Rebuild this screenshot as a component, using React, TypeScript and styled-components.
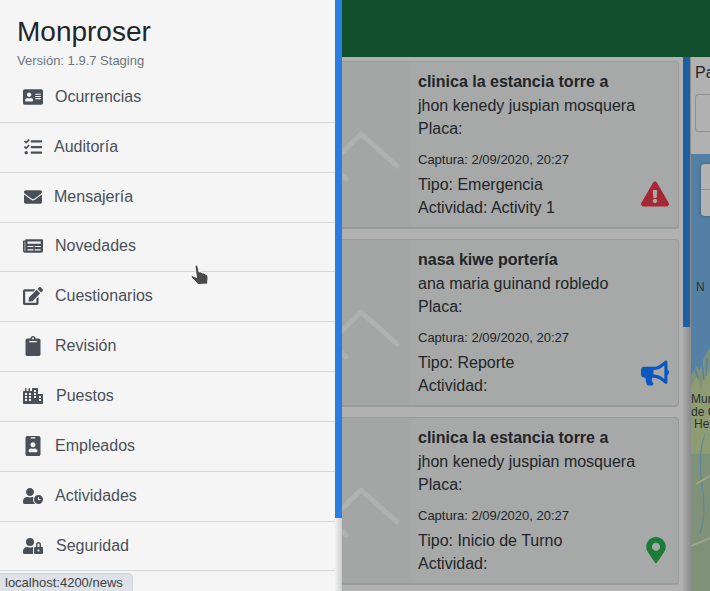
import React from 'react';
import styled, { createGlobalStyle } from 'styled-components';
import {
  FaAddressCard,
  FaBullhorn,
  FaCity,
  FaClipboard,
  FaEdit,
  FaEnvelope,
  FaExclamationTriangle,
  FaIdBadge,
  FaMapMarkerAlt,
  FaNewspaper,
  FaTasks,
  FaUserClock,
  FaUserLock,
} from 'react-icons/fa';

const GlobalStyle = createGlobalStyle`
  html, body {
    margin: 0;
    height: 100%;
    overflow: hidden;
    background: #b0b0b0;
  }
  #root {
    height: 100%;
  }
`;

const Page = styled.div`
  position: relative;
  display: flex;
  width: 710px;
  height: 591px;
  overflow: hidden;
  font-family: 'Liberation Sans', Arial, sans-serif;
`;

const Sidebar = styled.aside`
  width: 335px;
  flex: none;
  background: #f5f5f6;
  overflow: hidden;
`;

const Brand = styled.header`
  padding: 15px 17px 0;
  height: 73px;
  box-sizing: border-box;
`;

const BrandName = styled.h1`
  margin: 0;
  font-size: 28px;
  line-height: 34px;
  font-weight: 400;
  color: #212529;
`;

const Version = styled.div`
  margin-top: 3px;
  font-size: 13px;
  line-height: 18px;
  color: #6c757d;
`;

const Menu = styled.nav`
  display: flex;
  flex-direction: column;
`;

const MenuItem = styled.div`
  display: flex;
  align-items: center;
  height: 49.85px;
  flex: none;
  box-sizing: border-box;
  padding-bottom: 1px;
  border-bottom: 1px solid #d6d7d8;
  color: #495057;
  font-size: 16px;
`;

const MenuIcon = styled.span<{ $width: number; $left: number }>`
  display: flex;
  justify-content: center;
  width: ${(p) => p.$width}px;
  margin-left: ${(p) => p.$left}px;
  margin-right: 12px;
  color: #495057;
  font-size: 20px;
`;

const Scrollbar = styled.div`
  width: 7px;
  flex: none;
  display: flex;
  flex-direction: column;
`;

const ScrollThumb = styled.div`
  height: 518px;
  flex: none;
  background: #2a7de1;
`;

const ScrollTrack = styled.div`
  flex: 1;
  background: linear-gradient(to right, #f2f2f2, #cdcdcd);
`;

const Main = styled.main`
  flex: 1;
  min-width: 0;
  display: flex;
  flex-direction: column;
`;

const TopBar = styled.div`
  height: 57px;
  flex: none;
  background: #114e2c;
`;

const Content = styled.div`
  flex: 1;
  min-height: 0;
  display: flex;
`;

const FeedColumn = styled.section`
  width: 341px;
  flex: none;
  display: flex;
  flex-direction: column;
  gap: 10px;
  padding: 4px 4px 0 0;
  box-sizing: border-box;
  overflow: hidden;
  background: #b1b1b1;
`;

const Card = styled.article`
  display: flex;
  height: 168px;
  flex: none;
  box-sizing: border-box;
  position: relative;
  background: #a7a9a8;
  border: 1px solid #999a9a;
  border-left: 0;
  border-bottom-width: 2px;
  border-radius: 0 4px 4px 0;
`;

const Thumb = styled.div`
  width: 68px;
  flex: none;
  background: #a4a5a5;
  overflow: hidden;
`;

const ThumbArt = styled.svg`
  display: block;
  width: 68px;
  height: 100%;
`;

const CardBody = styled.div`
  flex: 1;
  padding: 8px 0 0 8px;
  font-size: 16px;
  line-height: 23.6px;
  color: #212529;
`;

const Site = styled.div`
  font-weight: 700;
`;

const Captured = styled.div`
  margin-top: 8px;
  margin-bottom: 2px;
  font-size: 13px;
  line-height: 22px;
`;

const TypeIcon = styled.span<{ $color: string; $size: number; $right: number; $bottom: number }>`
  position: absolute;
  right: ${(p) => p.$right}px;
  bottom: ${(p) => p.$bottom}px;
  display: flex;
  color: ${(p) => p.$color};
  font-size: ${(p) => p.$size}px;
`;

const FeedScroll = styled.div`
  width: 7px;
  flex: none;
  display: flex;
  flex-direction: column;
  border-right: 1px solid #8c8d8d;
`;

const FeedScrollThumb = styled.div`
  height: 270px;
  flex: none;
  background: #1e5fa3;
`;

const FeedScrollTrack = styled.div`
  flex: 1;
  background: linear-gradient(to right, #a9a9a9, #8f8f8f);
`;

const MapPanel = styled.section`
  flex: 1;
  min-width: 0;
  display: flex;
  flex-direction: column;
  background: #b1b1b1;
`;

const PanelHead = styled.div`
  height: 97px;
  flex: none;
  box-sizing: border-box;
  padding: 4px 0 0 4px;
  overflow: hidden;
`;

const PanelTitle = styled.div`
  font-size: 16px;
  line-height: 24px;
  color: #212529;
  white-space: nowrap;
`;

const PanelField = styled.div`
  margin-top: 9px;
  height: 38px;
  box-sizing: border-box;
  border: 1px solid #8f9091;
  border-right: 0;
  border-radius: 4px 0 0 4px;
  background: #b1b1b1;
`;

const MapArea = styled.div`
  position: relative;
  flex: 1;
  overflow: hidden;
  background: #5480a5;
`;

const MapArt = styled.svg`
  position: absolute;
  inset: 0;
  width: 19px;
  height: 437px;
`;

const ZoomControl = styled.div`
  position: absolute;
  top: 10px;
  left: 10px;
  width: 20px;
  height: 52px;
  border-radius: 4px;
  background: #b3b3b3;
  box-shadow: 0 0 4px rgba(0, 0, 0, 0.3);
`;

const ZoomDivider = styled.div`
  height: 25px;
  border-bottom: 1px solid #8f8f8f;
`;

const MapLabel = styled.div<{ $top: number; $left: number }>`
  position: absolute;
  top: ${(p) => p.$top}px;
  left: ${(p) => p.$left}px;
  font-size: 12px;
  line-height: 12px;
  color: #2b2f30;
  white-space: nowrap;
`;

const StatusBubble = styled.div`
  position: absolute;
  left: 0;
  bottom: 0;
  width: 133px;
  height: 18px;
  box-sizing: border-box;
  padding-left: 5px;
  background: #dee1e6;
  border: 1px solid #d0d3d8;
  border-left: 0;
  border-bottom: 0;
  border-radius: 0 5px 0 0;
  font-size: 13px;
  line-height: 18px;
  color: #3c4043;
  white-space: nowrap;
`;

const Cursor = styled.svg`
  position: absolute;
  left: 189px;
  top: 264px;
  width: 22px;
  height: 22px;
`;

const menuItems = [
  { label: 'Ocurrencias', Icon: FaAddressCard, width: 20, left: 23 },
  { label: 'Auditoría', Icon: FaTasks, width: 18, left: 24 },
  { label: 'Mensajería', Icon: FaEnvelope, width: 18, left: 24 },
  { label: 'Novedades', Icon: FaNewspaper, width: 20, left: 23 },
  { label: 'Cuestionarios', Icon: FaEdit, width: 20, left: 23 },
  { label: 'Revisión', Icon: FaClipboard, width: 20, left: 23 },
  { label: 'Puestos', Icon: FaCity, width: 22, left: 22 },
  { label: 'Empleados', Icon: FaIdBadge, width: 20, left: 23 },
  { label: 'Actividades', Icon: FaUserClock, width: 21, left: 22 },
  { label: 'Seguridad', Icon: FaUserLock, width: 22, left: 22 },
];

const reports = [
  {
    site: 'clinica la estancia torre a',
    person: 'jhon kenedy juspian mosquera',
    type: 'Emergencia',
    activity: 'Activity 1',
    icon: <FaExclamationTriangle />,
    color: '#a52834',
    size: 28,
    right: 9,
    bottom: 19,
  },
  {
    site: 'nasa kiwe portería',
    person: 'ana maria guinand robledo',
    type: 'Reporte',
    activity: '',
    icon: <FaBullhorn />,
    color: '#0b57c0',
    size: 28,
    right: 9,
    bottom: 18,
  },
  {
    site: 'clinica la estancia torre a',
    person: 'jhon kenedy juspian mosquera',
    type: 'Inicio de Turno',
    activity: '',
    icon: <FaMapMarkerAlt />,
    color: '#1c7c38',
    size: 26,
    right: 9,
    bottom: 20,
  },
];

const App: React.FC = () => {
  return (
    <Page>
      <GlobalStyle />
      <Sidebar>
        <Brand>
          <BrandName>Monproser</BrandName>
          <Version>Versión: 1.9.7 Staging</Version>
        </Brand>
        <Menu>
          {menuItems.map(({ label, Icon, width, left }) => (
            <MenuItem key={label}>
              <MenuIcon $width={width} $left={left}>
                <Icon />
              </MenuIcon>
              {label}
            </MenuItem>
          ))}
        </Menu>
      </Sidebar>
      <Scrollbar>
        <ScrollThumb />
        <ScrollTrack />
      </Scrollbar>
      <Main>
        <TopBar />
        <Content>
          <FeedColumn>
            {reports.map((r, i) => (
              <Card key={i}>
                <Thumb>
                  <ThumbArt viewBox="0 0 68 168" preserveAspectRatio="xMinYMin slice">
                    <path
                      d="M-20 110 L19 72 L55 104"
                      fill="none"
                      stroke="#b0b1b1"
                      strokeWidth="5"
                      strokeLinecap="round"
                      strokeLinejoin="round"
                    />
                    <path d="M-4 110 L4 117" fill="none" stroke="#b0b1b1" strokeWidth="5" strokeLinecap="round" />
                  </ThumbArt>
                </Thumb>
                <CardBody>
                  <Site>{r.site}</Site>
                  <div>{r.person}</div>
                  <div>Placa:</div>
                  <Captured>Captura: 2/09/2020, 20:27</Captured>
                  <div>Tipo: {r.type}</div>
                  <div>Actividad:{r.activity ? ` ${r.activity}` : ''}</div>
                </CardBody>
                <TypeIcon $color={r.color} $size={r.size} $right={r.right} $bottom={r.bottom}>
                  {r.icon}
                </TypeIcon>
              </Card>
            ))}
          </FeedColumn>
          <FeedScroll>
            <FeedScrollThumb />
            <FeedScrollTrack />
          </FeedScroll>
          <MapPanel>
            <PanelHead>
              <PanelTitle>Panel</PanelTitle>
              <PanelField />
            </PanelHead>
            <MapArea>
              <MapArt viewBox="0 0 19 437" preserveAspectRatio="none">
                <path
                  d="M0 222 L5 212 L9 216 L12 206 L16 198 L19 194 L19 437 L0 437 Z"
                  fill="#7f9178"
                />
                <path d="M0 232 L6 222 L10 236 L14 214 L19 220 L19 300 L0 300 Z" fill="#8e9c74" />
                <path d="M3 212 L7 224 M11 208 L13 226 M16 204 L15 222" stroke="#5480a5" strokeWidth="1.5" fill="none" />
                <path d="M14 280 Q6 300 11 330 T9 380" stroke="#5a86a0" strokeWidth="1" fill="none" />
                <path d="M5 330 L19 322 M0 392 L19 384" stroke="#a3a892" strokeWidth="1.5" fill="none" />
              </MapArt>
              <ZoomControl>
                <ZoomDivider />
              </ZoomControl>
              <MapLabel $top={127} $left={5}>N</MapLabel>
              <MapLabel $top={239} $left={0}>Mur</MapLabel>
              <MapLabel $top={252} $left={0}>de C</MapLabel>
              <MapLabel $top={264} $left={3}>He</MapLabel>
            </MapArea>
          </MapPanel>
        </Content>
      </Main>
      <Cursor viewBox="0 0 22 22">
        <path
          d="M6 1.5 L8.5 1 L10 8 L12 8 L13 9 L15 9 L16 10 L18 10.5 L19 13 L18.5 20 L9 20.5 L6 17 L2 13 L3 11.5 L7.5 13.5 Z"
          fill="#4a4a4a"
          stroke="#ffffff"
          strokeWidth="0.8"
        />
      </Cursor>
      <StatusBubble>localhost:4200/news</StatusBubble>
    </Page>
  );
};

export default App;
